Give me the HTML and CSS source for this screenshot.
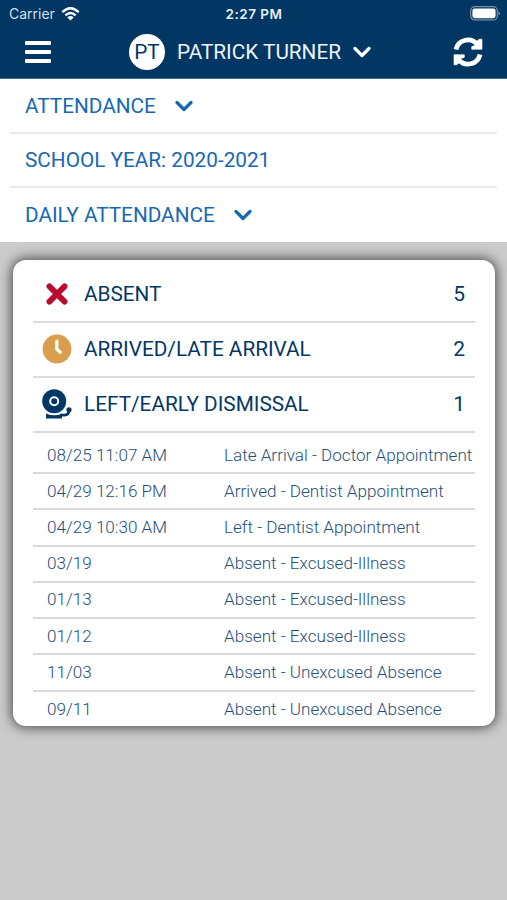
FILE: index.html
```html
<!DOCTYPE html>
<html lang="en">
<head>
<meta charset="utf-8">
<title>Attendance</title>
<link rel="stylesheet" href="styles.css">
</head>
<body>
<header class="header">
  <div class="status">
    <div class="status-left"><span class="carrier">Carrier</span>
      <svg class="wifi" viewBox="0 0 18 14" fill="none" stroke="#fff" stroke-width="2.3"><path d="M.8 5.1Q9-2.7 17.2 5.1M3.9 8.3Q9 3.6 14.1 8.3"/><path d="M9 13.6 5.9 10.4Q9 7.8 12.1 10.4Z" fill="#fff" stroke="none"/></svg>
    </div>
    <span class="clock">2:27 PM</span>
    <svg class="battery" viewBox="0 0 31 15"><rect x=".7" y=".7" width="26.6" height="13.2" rx="4" fill="none" stroke="#7890a8" stroke-width="1.2"/><rect x="2.4" y="2.4" width="23.2" height="9.8" rx="2.4" fill="#fff"/><path d="M28.5 5q3 2.3 0 4.6z" fill="#7890a8"/></svg>
  </div>
  <div class="bar">
    <svg class="menu" viewBox="0 0 26 24" fill="#fff"><rect y="1" width="26" height="4" rx="1"/><rect y="10" width="26" height="4" rx="1"/><rect y="19" width="26" height="4" rx="1"/></svg>
    <div class="student"><span class="avatar">PT</span><span class="name">PATRICK TURNER</span>
      <svg class="chevron" viewBox="0 0 18 12"><path d="M2 2.5 9 9.5 16 2.5"/></svg>
    </div>
    <svg class="sync" viewBox="0 0 30 30"><path d="M3 12.6A12.2 12.2 0 0 1 24.5 7.6M27 17.4A12.2 12.2 0 0 1 5.5 22.4" fill="none" stroke="#fff" stroke-width="4.8"/><path d="M26.2 2.2H29V12.3H18.7V9.6L22 8.6L23 5ZM3.8 27.8H1V17.7H11.3V20.4L8 21.4L7 25Z" fill="#fff" stroke="#fff" stroke-width=".6" stroke-linejoin="round"/></svg>
  </div>
</header>
<nav class="filters">
  <div class="filter"><span>ATTENDANCE</span><svg class="chevron" viewBox="0 0 18 12"><path d="M2 2.5 9 9.5 16 2.5"/></svg></div>
  <div class="filter"><span>SCHOOL YEAR: 2020-2021</span></div>
  <div class="filter"><span>DAILY ATTENDANCE</span><svg class="chevron" viewBox="0 0 18 12"><path d="M2 2.5 9 9.5 16 2.5"/></svg></div>
</nav>
<main class="card">
  <div class="summary">
    <svg class="icon" viewBox="0 0 30 30"><path d="M7.4 7.4 22.6 22.6M22.6 7.4 7.4 22.6" stroke="#b90b2e" stroke-width="5.8" stroke-linecap="round"/></svg>
    <span class="label">ABSENT</span><span class="count">5</span>
  </div>
  <div class="summary">
    <svg class="icon" viewBox="0 0 30 30"><circle cx="15" cy="15" r="14.4" fill="#d99f4e"/><path d="M14.8 7.2V15.2L18.2 18.2" fill="none" stroke="#fff" stroke-width="3.2" stroke-linecap="round"/></svg>
    <span class="label">ARRIVED/LATE ARRIVAL</span><span class="count">2</span>
  </div>
  <div class="summary">
    <svg class="icon" viewBox="0 0 30 30"><circle cx="12.2" cy="12.2" r="12" fill="#023866"/><circle cx="12.2" cy="12.2" r="4" fill="none" stroke="#fff" stroke-width="2"/><path d="M18 26.2H22.5Q27 26 27 21" fill="none" stroke="#023866" stroke-width="2.8"/><path d="M4 24.4Q12 28 20 24.8V29.6H4z" fill="#023866"/><circle cx="27" cy="20.8" r="2.6" fill="#023866"/></svg>
    <span class="label">LEFT/EARLY DISMISSAL</span><span class="count">1</span>
  </div>
  <div class="entry"><span>08/25 11:07 AM</span><span>Late Arrival - Doctor Appointment</span></div>
  <div class="entry"><span>04/29 12:16 PM</span><span>Arrived - Dentist Appointment</span></div>
  <div class="entry"><span>04/29 10:30 AM</span><span>Left - Dentist Appointment</span></div>
  <div class="entry"><span>03/19</span><span>Absent - Excused-Illness</span></div>
  <div class="entry"><span>01/13</span><span>Absent - Excused-Illness</span></div>
  <div class="entry"><span>01/12</span><span>Absent - Excused-Illness</span></div>
  <div class="entry"><span>11/03</span><span>Absent - Unexcused Absence</span></div>
  <div class="entry"><span>09/11</span><span>Absent - Unexcused Absence</span></div>
</main>
</body>
</html>
```
FILE: styles.css
```css
* { box-sizing: border-box; }
body { margin: 0; height: 900px; background: #cbcbcb; font-family: Roboto, sans-serif; overflow: hidden; }
svg { display: block; flex: none; }
.header { height: 79px; background: #023764; color: #fff; border-bottom: 1px solid #3d6d96; }
.status { height: 27px; display: grid; grid-template-columns: 1fr auto 1fr; align-items: center; padding: 0 6px 0 9px; font-family: Inter, sans-serif; }
.status-left { display: flex; align-items: center; gap: 6px; }
.carrier { font-size: 14px; color: #d3dfe9; }
.wifi { width: 19px; height: 14px; }
.clock { margin-left: -2px; font-weight: 600; font-size: 13.5px; letter-spacing: .5px; color: #e8eef4; }
.battery { width: 31px; height: 15px; justify-self: end; }
.bar { height: 50px; display: flex; align-items: center; padding: 0 24px 0 25px; }
.menu { width: 26px; height: 24px; }
.student { display: flex; align-items: center; margin-left: 78px; font-size: 20.75px; }
.avatar { width: 36px; height: 36px; border-radius: 50%; background: #fff; color: #023764; display: flex; align-items: center; justify-content: center; margin-right: 12px; }
.chevron { width: 18px; height: 12px; fill: none; stroke: currentColor; stroke-width: 3.2; stroke-linecap: round; stroke-linejoin: round; }
.name { margin-right: 12px; color: #eef3f8; }
.sync { width: 30px; height: 30px; margin-left: auto; }
.filters { height: 163px; background: #fff; padding: 0 10px; color: #1768b3; }
.filter { height: 54.5px; display: flex; align-items: center; gap: 19px; padding: 1px 15px 0; font-size: 20.75px; border-bottom: 2px solid #e9e9e9; }
.filter:last-child { height: 53px; padding-top: 0; border-bottom: 0; }
.card { width: 482px; height: 466px; margin: 18px 0 0 13px; padding: 8px 20px 0; border-radius: 13px; background: #fff; box-shadow: 0 0 12px 2px rgba(0, 0, 0, .6); color: #023866; }
.summary { height: 55px; display: flex; align-items: center; padding: 0 10px 2px 9px; border-bottom: 2px solid #dcdcdc; font-size: 20.75px; }
.icon { width: 30px; height: 30px; margin-right: 12px; }
.count { margin-left: auto; font-size: 21px; }
.entry { height: 36.25px; display: grid; grid-template-columns: 177px 1fr; align-items: center; padding: 0 0 1px 14px; font-size: 17.1px; font-weight: 300; color: #1f4f7a; white-space: nowrap; border-bottom: 2px solid #d9d9d9; }
.summary + .entry { height: 41px; padding-top: 5px; }
.entry:last-child { height: 35px; border-bottom: 0; }
```
